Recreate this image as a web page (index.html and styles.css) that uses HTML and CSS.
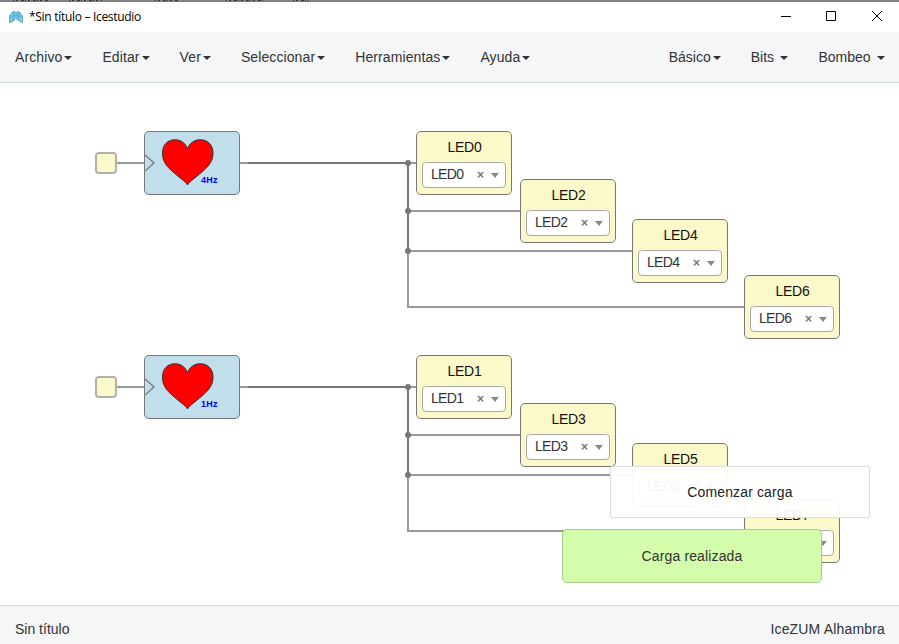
FILE: index.html
```html
<!DOCTYPE html>
<html lang="es">
<head>
<meta charset="utf-8">
<title>*Sin título – Icestudio</title>
<link rel="stylesheet" href="styles.css">
</head>
<body>
<div class="window">
  <svg class="backdrop" width="899" height="2"><path d="M0 .5H899" stroke="#85878a"/><path d="M13 .5H49M69 .5H102M155 .5H179M226 .5H264M293 .5H309" stroke="#33363c" stroke-dasharray="1 2 2 3 3 1"/><path d="M0 1.500H899" stroke="#a8752f"/></svg>
  <header class="titlebar">
    <svg class="logo" width="16" height="14" viewBox="0 0 16 14"><path d="M5 1.500 8 2.500 11 1.500 14.500 6 14.500 12.500 11 11 8 8.500 5 11 1.500 12.500 1.500 6Z" fill="#74cdf0" stroke="#3d7797" stroke-dasharray="1.500 1"/><path d="M5 2 6 6 2 7M11 2 10 6 14 7M6 6 8 4 10 6M6 6 5 11M10 6 11 11M6 6H10" fill="none" stroke="#459cc4" stroke-width=".6"/></svg>
    <span class="title">*Sin título – Icestudio</span>
    <svg class="controls" width="100" height="12" viewBox="0 0 100 12" fill="none" stroke="#000"><path d="M0 5.500H10"/><path d="M45.500 .5h9v9h-9z"/><path d="M91 0 101 10M101 0 91 10"/></svg>
  </header>
  <nav class="menubar">
    <ul class="menu main">
      <li>Archivo<i class="caret"></i></li>
      <li>Editar<i class="caret"></i></li>
      <li>Ver<i class="caret"></i></li>
      <li>Seleccionar<i class="caret"></i></li>
      <li>Herramientas<i class="caret"></i></li>
      <li>Ayuda<i class="caret"></i></li>
    </ul>
    <ul class="menu blocks">
      <li>Básico<i class="caret"></i></li>
      <li>Bits <i class="caret spaced"></i></li>
      <li>Bombeo <i class="caret spaced"></i></li>
    </ul>
  </nav>
  <main class="canvas">
    <svg class="wires" width="899" height="522" viewBox="0 83 899 522">
      <g id="net" fill="none" stroke="#999" stroke-width="2">
        <path d="M116 163H144M240 163H416M408 163V307H744M408 211H520M408 251H632"/>
        <path d="M248 163H408M408 163V251" stroke="#777"/>
        <g fill="#777" stroke="none"><circle cx="408" cy="163" r="3"/><circle cx="408" cy="211" r="3"/><circle cx="408" cy="251" r="3"/></g>
      </g>
      <use href="#net" y="224"/>
    </svg>
    <div class="port p1"></div>
    <div class="port p2"></div>
    <div class="heart h1"><svg width="94" height="62" viewBox="145 132 94 62"><path d="M145 155 154 163 145 171" fill="none" stroke="#777" stroke-width="1.300"/><path d="M187.500 185C186 182 181 179 172 171C165 165 162.500 160 162.500 153C162.500 136 184 136 187.500 149C191 136 213 136 213 153C213 160 210 165 203 171C194 179 189 182 187.500 185Z" fill="red" stroke="#333"/></svg><span>4Hz</span></div>
    <div class="heart h2"><svg width="94" height="62" viewBox="145 132 94 62"><path d="M145 155 154 163 145 171" fill="none" stroke="#777" stroke-width="1.300"/><path d="M187.500 185C186 182 181 179 172 171C165 165 162.500 160 162.500 153C162.500 136 184 136 187.500 149C191 136 213 136 213 153C213 160 210 165 203 171C194 179 189 182 187.500 185Z" fill="red" stroke="#333"/></svg><span>1Hz</span></div>
    <div class="led l0"><b>LED0</b><div class="select"><span>LED0</span><em>×</em><i></i></div></div>
    <div class="led l2"><b>LED2</b><div class="select"><span>LED2</span><em>×</em><i></i></div></div>
    <div class="led l4"><b>LED4</b><div class="select"><span>LED4</span><em>×</em><i></i></div></div>
    <div class="led l6"><b>LED6</b><div class="select"><span>LED6</span><em>×</em><i></i></div></div>
    <div class="led l1"><b>LED1</b><div class="select"><span>LED1</span><em>×</em><i></i></div></div>
    <div class="led l3"><b>LED3</b><div class="select"><span>LED3</span><em>×</em><i></i></div></div>
    <div class="led l5"><b>LED5</b><div class="select"><span>LED5</span><em>×</em><i></i></div></div>
    <div class="led l7"><b>LED7</b><div class="select"><span>LED7</span><em>×</em><i></i></div></div>
    <div class="toast message">Comenzar carga</div>
    <div class="toast success">Carga realizada</div>
  </main>
  <footer class="status"><span>Sin título</span><span class="board">IceZUM Alhambra</span></footer>
</div>
</body>
</html>
```

FILE: styles.css
```css
* { box-sizing: border-box; }
body { margin: 0; font: 14px/20px "Liberation Sans", Arial, sans-serif; color: #333; background: #fff; }
.window { height: 644px; display: flex; flex-direction: column; overflow: hidden; }
.backdrop { display: block; flex: none; }
.titlebar { height: 30px; flex: none; display: flex; align-items: center; padding: 0 18px 0 8px; color: #000; }
.logo { margin-right: 5px; }
.title { font: 12px/16px "Open Sans", "Noto Sans", sans-serif; letter-spacing: -0.3px; }
.controls { margin-left: auto; overflow: visible; }
.menubar { height: 51px; flex: none; display: flex; justify-content: space-between; background: #f4f6f8; border-bottom: 1px solid #d3dcdc; }
.menu { display: flex; margin: 0; padding: 0; list-style: none; }
.menu li { padding: 15px; display: flex; align-items: center; white-space: pre; }
.main { letter-spacing: 0.1px; }
.blocks { margin-right: -1px; }
.caret { border: 4px solid transparent; border-top-color: #333; border-bottom: 0; margin-left: 2px; margin-top: 2px; }
.spaced { margin-left: 2.5px; }
.canvas { flex: 1; position: relative; }
.wires { display: block; }
.port, .heart, .led, .toast { position: absolute; }
.port { left: 95px; width: 22px; height: 22px; border: 2px solid #b2b2a8; border-radius: 4px; background: #fbf9c9; }
.p1 { top: 69px; }
.p2 { top: 293px; }
.heart { left: 144px; width: 96px; height: 64px; border: 1px solid #777; border-radius: 5px; background: #c0dfeb; }
.h1 { top: 48px; }
.h2 { top: 272px; }
.heart svg { display: block; }
.heart span { position: absolute; left: 56px; top: 43px; font: bold 9px/11px "Liberation Sans", Arial, sans-serif; letter-spacing: 0.3px; color: #00f; }
.led { width: 96px; height: 64px; padding: 5px; border: 1px solid #777; border-radius: 5px; background: #fbf9c9; }
.led b { display: block; font-weight: normal; text-align: center; text-indent: 1px; letter-spacing: -0.2px; color: #111; height: 25px; }
.l0 { left: 416px; top: 48px; }
.l2 { left: 520px; top: 96px; }
.l4 { left: 632px; top: 136px; }
.l6 { left: 744px; top: 192px; }
.l1 { left: 416px; top: 272px; }
.l3 { left: 520px; top: 320px; }
.l5 { left: 632px; top: 360px; }
.l7 { left: 744px; top: 416px; }
.select { height: 26px; display: flex; align-items: center; border: 1px solid #aaa; border-radius: 4px; background: #fff; padding: 0 6px 2px 8px; color: #333; }
.select span { letter-spacing: -0.7px; }
.select em { margin: 2px 0 0 auto; font: bold 12px/16px "Liberation Sans", Arial, sans-serif; color: #777; }
.select i { border: 4px solid transparent; border-top: 5px solid #888; border-bottom: 0; margin: 3px 0 0 7px; }
.toast { width: 260px; display: flex; align-items: center; justify-content: center; border: 1px solid; letter-spacing: 0.13px; }
.message { left: 610px; top: 383px; height: 52px; border-color: #ddd; border-radius: 2px; background: rgba(255,255,255,.95); color: #222; }
.success { left: 562px; top: 446px; height: 54px; border-color: #a9cb87; border-radius: 5px; background: #d3fdaa; }
.status { height: 39px; flex: none; display: flex; justify-content: space-between; align-items: center; padding: 8px 14px 0 15px; background: #f4f6f8; border-top: 1px solid #d8d8d8; }
.board { letter-spacing: 0.17px; }
```
